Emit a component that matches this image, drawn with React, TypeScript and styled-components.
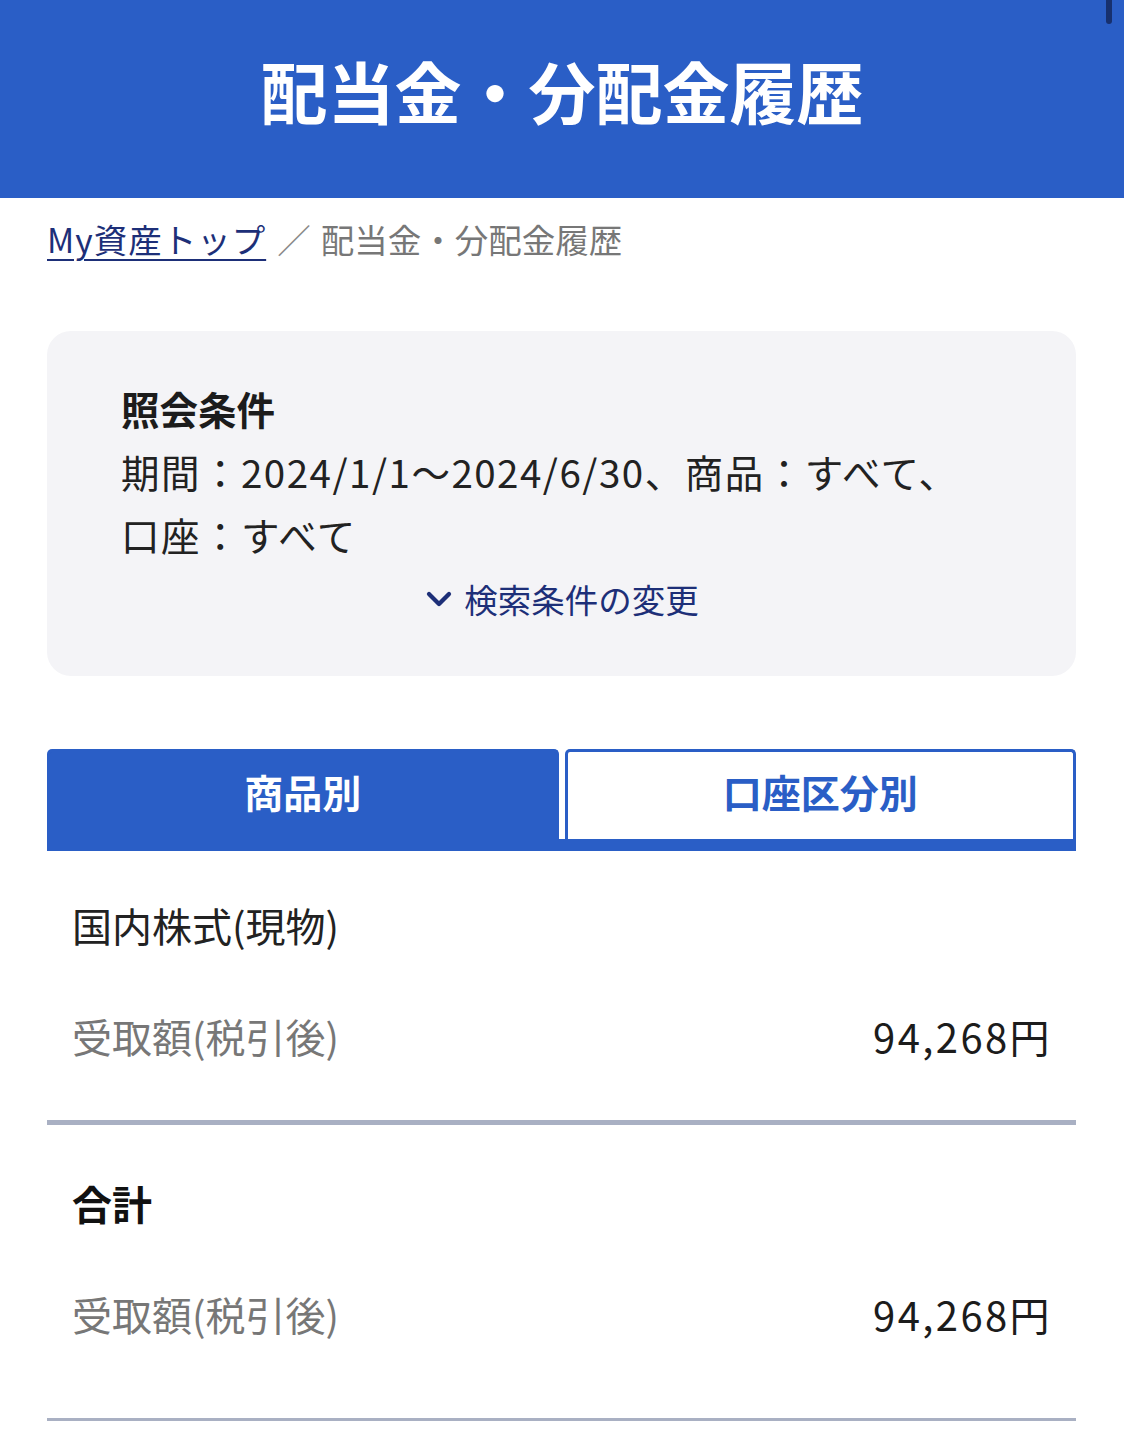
import React from "react";
import styled, { createGlobalStyle } from "styled-components";

const GlobalStyle = createGlobalStyle`
	body {
		margin: 0;
		background: #fff;
		font-family: "Noto Sans CJK JP", "Noto Sans", sans-serif;
		color: #222;
	}
`;

const BLUE = "#2a5ec6";

const Page = styled.div`
	position: relative;
	width: 1124px;
	min-height: 1440px;
	overflow: hidden;
`;

const Header = styled.header`
	height: 198px;
	box-sizing: border-box;
	padding-bottom: 20px;
	background: ${BLUE};
	display: flex;
	align-items: center;
	justify-content: center;
`;

const Title = styled.h1`
	margin: 0;
	color: #fff;
	font-size: 67px;
	font-weight: 700;
	line-height: 1;
`;

const ScrollThumb = styled.div`
	position: absolute;
	top: -4px;
	right: 12px;
	width: 6px;
	height: 28px;
	border-radius: 3px;
	background: #17306e;
`;

const Body = styled.main`
	padding: 0 48px 0 47px;
`;

const Crumbs = styled.nav`
	margin-top: 16px;
	display: flex;
	align-items: center;
	font-size: 33.5px;
	line-height: 50px;
	color: #777;
`;

const CrumbLink = styled.a`
	color: #1d2f78;
	text-decoration: underline;
	text-underline-offset: 6px;
	text-decoration-thickness: 2px;
	letter-spacing: 1px;
`;

const Slash = styled.span`
	margin: 0 10px 0 11px;
	color: #888;
`;

const Card = styled.section`
	margin-top: 67px;
	background: #f4f4f7;
	border-radius: 24px;
	padding: 45px 74px 52px;
`;

const CardTitle = styled.h2`
	margin: 0;
	font-size: 38.5px;
	font-weight: 700;
	line-height: 64px;
	color: #1c1c1c;
`;

const CardText = styled.p`
	margin: 0;
	font-size: 38.5px;
	line-height: 63px;
	color: #222;
	letter-spacing: 1.5px;
`;

const ChangeLink = styled.a`
	display: flex;
	align-items: center;
	justify-content: center;
	gap: 10px;
	margin-top: 8px;
	font-size: 33.5px;
	line-height: 50px;
	color: #1d2f78;
	cursor: pointer;
	svg {
		width: 30px;
		height: 30px;
	}
`;

const Tabs = styled.div`
	margin-top: 73px;
	display: grid;
	grid-template-columns: 1fr 1fr;
	column-gap: 6px;
	border-bottom: 12px solid ${BLUE};
`;

const Tab = styled.button<{ $active?: boolean }>`
	height: 90px;
	border: 3px solid ${BLUE};
	border-bottom: none;
	border-radius: 5px 5px 0 0;
	background: ${(p) => (p.$active ? BLUE : "#fff")};
	color: ${(p) => (p.$active ? "#fff" : BLUE)};
	font-family: inherit;
	font-size: 39px;
	font-weight: 700;
	padding: 0 0 10px;
	cursor: pointer;
`;

const Section = styled.section<{ $top: number; $bottom: number; $line: number }>`
	padding: ${(p) => p.$top}px 26px ${(p) => p.$bottom}px 25px;
	border-bottom: ${(p) => p.$line}px solid #a9b0c3;
`;

const SectionTitle = styled.h3<{ $bold?: boolean }>`
	margin: 0;
	font-size: 40px;
	line-height: 56px;
	font-weight: ${(p) => (p.$bold ? 700 : 400)};
	color: ${(p) => (p.$bold ? "#111" : "#222")};
`;

const Row = styled.div`
	margin-top: 55px;
	display: flex;
	justify-content: space-between;
	align-items: center;
	font-size: 40px;
	line-height: 56px;
`;

const Label = styled.span`
	color: #777;
`;

const Amount = styled.span`
	color: #1c1c1c;
	letter-spacing: 2.4px;
	margin-right: -2px;
`;

const Chevron = () => (
	<svg viewBox="0 0 24 24" fill="none" stroke="#1d2f78" strokeWidth={3.4} strokeLinecap="round" strokeLinejoin="round">
		<path d="M4 8l8 8 8-8" />
	</svg>
);

export default function App() {
	return (
		<Page>
			<GlobalStyle />
			<Header>
				<Title>配当金・分配金履歴</Title>
			</Header>
			<ScrollThumb />
			<Body>
				<Crumbs>
					<CrumbLink>My資産トップ</CrumbLink>
					<Slash>／</Slash>
					<span>配当金・分配金履歴</span>
				</Crumbs>

				<Card>
					<CardTitle>照会条件</CardTitle>
					<CardText>
						期間：2024/1/1〜2024/6/30、商品：すべて、
						<br />
						口座：すべて
					</CardText>
					<ChangeLink>
						<Chevron />
						検索条件の変更
					</ChangeLink>
				</Card>

				<Tabs>
					<Tab $active>商品別</Tab>
					<Tab>口座区分別</Tab>
				</Tabs>

				<Section $top={46} $bottom={56} $line={5}>
					<SectionTitle>国内株式(現物)</SectionTitle>
					<Row>
						<Label>受取額(税引後)</Label>
						<Amount>94,268円</Amount>
					</Row>
				</Section>

				<Section $top={50} $bottom={76} $line={3}>
					<SectionTitle $bold>合計</SectionTitle>
					<Row>
						<Label>受取額(税引後)</Label>
						<Amount>94,268円</Amount>
					</Row>
				</Section>
			</Body>
		</Page>
	);
}
